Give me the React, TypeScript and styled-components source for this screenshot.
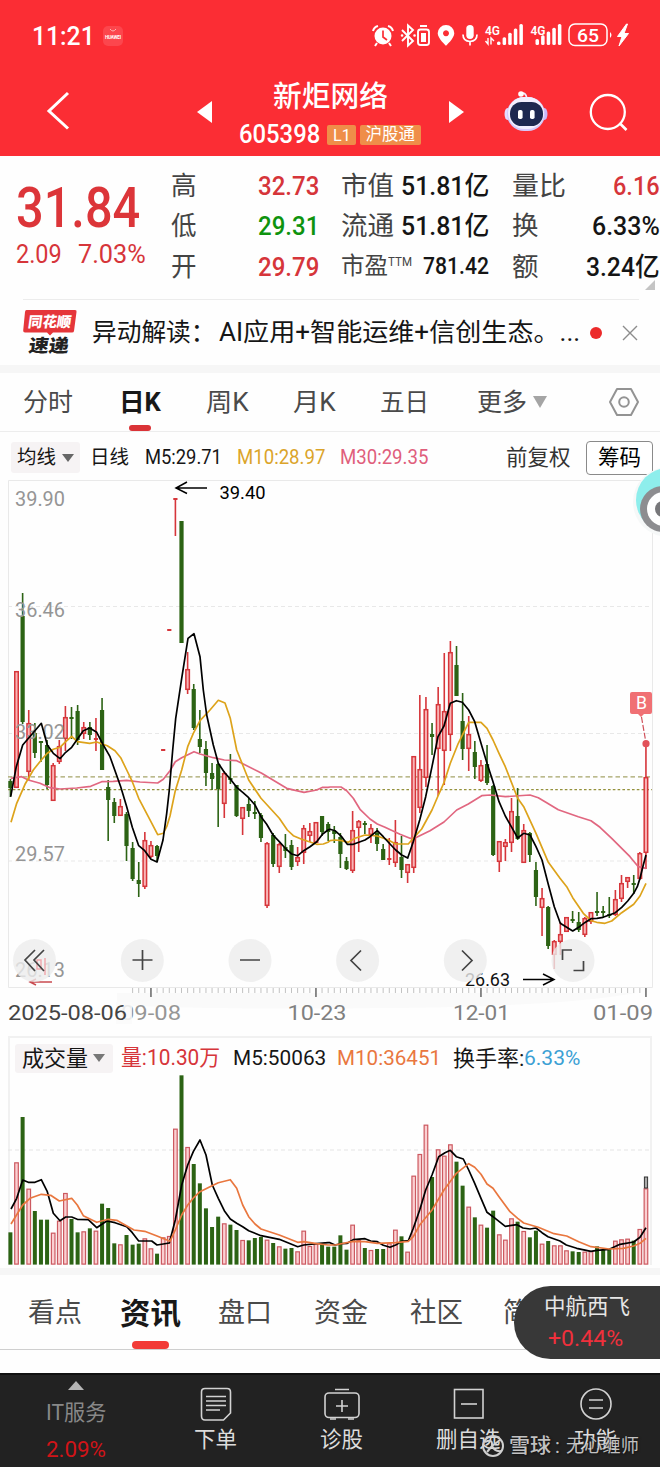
import React, { useLayoutEffect, useRef, useState } from "react";
import styled, { createGlobalStyle } from "styled-components";

const FONT = 'Roboto, "Noto Sans CJK SC", sans-serif';
const RED = "#d6353a";
const GREEN = "#2c6314";

const Global = createGlobalStyle`
  body { margin: 0; background: #fefefe; font-family: ${FONT}; }
  * { box-sizing: border-box; }
  svg { display: block; flex: none; }
`;

/* ---------- text that keeps a given width ---------- */
const FitBox = styled.span<{ $w: number; $size: number; $color?: string; $weight?: number; $ml?: number }>`
  display: block;
  flex: none;
  width: ${(p) => p.$w}px;
  margin-left: ${(p) => p.$ml ?? 0}px;
  height: ${(p) => Math.round(p.$size * 1.3)}px;
  line-height: ${(p) => Math.round(p.$size * 1.3)}px;
  font-size: ${(p) => p.$size}px;
  font-weight: ${(p) => p.$weight ?? 400};
  color: ${(p) => p.$color ?? "inherit"};
`;
const FitText = styled.span`
  display: inline-block;
  white-space: nowrap;
  transform-origin: 0 50%;
`;

type FitProps = { w: number; size: number; color?: string; weight?: number; ml?: number; children: React.ReactNode };
function Fit({ w, size, color, weight, ml, children }: FitProps) {
  const ref = useRef<HTMLSpanElement>(null);
  const [scale, setScale] = useState(1);
  useLayoutEffect(() => {
    if (ref.current) setScale(w / ref.current.offsetWidth);
  }, [w, size, children]);
  return (
    <FitBox $w={w} $size={size} $color={color} $weight={weight} $ml={ml}>
      <FitText ref={ref} style={{ transform: `scaleX(${scale})` }}>{children}</FitText>
    </FitBox>
  );
}

/* ---------- page ---------- */
const Page = styled.main`
  position: relative;
  width: 660px;
  height: 1467px;
  overflow: hidden;
  background: #fefefe;
  color: #161616;
`;
const Header = styled.header`
  height: 156px;
  background: #fb2d34;
  color: #fff;
`;
const StatusBar = styled.div`
  display: flex;
  align-items: center;
  height: 72px;
  padding: 0 29px 0 32px;
`;
const Chip = styled.span`
  width: 20px;
  height: 20px;
  margin: 0 auto 0 8px;
  border-radius: 5px;
  background: #fc464d;
`;
const NavBar = styled.div`
  display: flex;
  align-items: center;
  height: 80px;
  padding: 0 32px 0 46px;
`;
const Arrow = styled.svg<{ $ml: number }>`
  margin-left: ${(p) => p.$ml}px;
`;
const TitleBlock = styled.div`
  width: 182px;
  margin-left: 27px;
  display: flex;
  flex-direction: column;
  align-items: center;
  margin-top: 5px;
`;
const CodeRow = styled.div`
  display: flex;
  align-items: center;
  height: 34px;
  margin-top: 2px;
`;
const Tag = styled.span<{ $w: number; $ml: number }>`
  display: flex;
  justify-content: center;
  align-items: center;
  width: ${(p) => p.$w}px;
  height: 20px;
  margin-left: ${(p) => p.$ml}px;
  border-radius: 2px;
  background: #ef8e49;
`;

/* ---------- quote ---------- */
const Quote = styled.section`
  position: relative;
  display: flex;
  height: 143px;
  padding: 10px 0 0 16px;
`;
const PriceBlock = styled.div`
  width: 155px;
  padding-top: 6px;
`;
const ChangeRow = styled.div`
  display: flex;
  margin-top: -7px;
`;
const StatColumn = styled.div<{ $w: number; $ml?: number }>`
  width: ${(p) => p.$w}px;
  margin-left: ${(p) => p.$ml ?? 0}px;
`;
const StatRow = styled.div`
  display: flex;
  justify-content: space-between;
  align-items: center;
  height: 40.3px;
  color: #444;
`;
const Sup = styled.span`
  display: flex;
  align-items: flex-start;
  height: 28px;
  margin-right: auto;
`;
const Corner = styled.span`
  position: absolute;
  right: 5px;
  bottom: 9px;
  border-left: 10px solid transparent;
  border-bottom: 10px solid #c4c4c4;
`;

/* ---------- news ---------- */
const News = styled.section`
  display: flex;
  align-items: center;
  height: 66px;
  margin: 0 21px 0 23px;
  border-top: 1px solid #ececec;
`;
const Dot = styled.span`
  flex: none;
  width: 12px;
  height: 12px;
  margin: 0 27px 0 10px;
  border-radius: 50%;
  background: #ec2a2a;
`;
const Band = styled.div<{ $h: number }>`
  height: ${(p) => p.$h}px;
  background: #f6f6f6;
`;

/* ---------- tabs ---------- */
const Tabs = styled.nav<{ $h: number; $line: string }>`
  display: flex;
  align-items: center;
  height: ${(p) => p.$h}px;
  border-bottom: 1px solid ${(p) => p.$line};
  color: #4a4a4a;
  overflow: hidden;
`;
const Tab = styled.div<{ $ml: number; $pt?: number; $bar?: number; $barH?: number; $red?: string }>`
  position: relative;
  display: flex;
  align-items: center;
  height: 100%;
  margin-left: ${(p) => p.$ml}px;
  padding-top: ${(p) => p.$pt ?? 0}px;
  &::after {
    content: "";
    position: absolute;
    display: ${(p) => (p.$bar ? "block" : "none")};
    left: calc(50% - ${(p) => (p.$bar ?? 0) / 2}px);
    bottom: 0;
    width: ${(p) => p.$bar ?? 0}px;
    height: ${(p) => p.$barH ?? 6}px;
    border-radius: 4px;
    background: ${(p) => p.$red ?? "#da3337"};
  }
`;
const Down = styled.span<{ $w: number; $h: number; $ml: number; $c: string }>`
  margin-left: ${(p) => p.$ml}px;
  border: ${(p) => p.$w / 2}px solid transparent;
  border-top: ${(p) => p.$h}px solid ${(p) => p.$c};
  border-bottom: 0;
`;

/* ---------- indicators ---------- */
const IndicatorRow = styled.div`
  display: flex;
  align-items: center;
  height: 48px;
  padding: 3px 7px 0 11px;
`;
const Select = styled.div<{ $w: number; $h: number; $pl: number }>`
  display: flex;
  align-items: center;
  width: ${(p) => p.$w}px;
  height: ${(p) => p.$h}px;
  padding-left: ${(p) => p.$pl}px;
  border-radius: 3px;
  background: #f6f3f4;
`;
const OutlineButton = styled.button`
  display: flex;
  justify-content: center;
  align-items: center;
  width: 67px;
  height: 34px;
  margin-left: 15px;
  padding: 0;
  border: 1px solid #8a8a8a;
  border-radius: 4px;
  background: #fff;
  font-family: inherit;
`;
const VolumeHead = styled.div`
  display: flex;
  align-items: center;
  height: 39px;
  margin: 0 8px;
  padding: 3px 0 0 5px;
  border: 2px solid #f1f1f1;
  border-bottom: 0;
`;

/* ---------- bottom ---------- */
const Gap = styled.div`
  height: 23px;
`;
const Dock = styled.footer`
  display: flex;
  height: 95px;
  background: #222;
  border-top: 2px solid #111;
  color: #dcdcdc;
`;
const DockItem = styled.div<{ $w: number; $ml: number }>`
  display: flex;
  flex-direction: column;
  align-items: center;
  width: ${(p) => p.$w}px;
  margin-left: ${(p) => p.$ml}px;
  padding-top: 12px;
  gap: 5px;
`;
const Sector = styled.div`
  display: flex;
  flex-direction: column;
  align-items: center;
  width: 60px;
  margin-left: 46px;
  padding-top: 6px;
  gap: 8.5px;
`;
const Up = styled.span`
  border: 8px solid transparent;
  border-bottom: 9px solid #b5b5b5;
  border-top: 0;
`;
const FloatPill = styled.aside`
  position: absolute;
  right: 0;
  top: 1286px;
  width: 146px;
  height: 73px;
  padding: 7px 0 0 30px;
  border-radius: 37px 0 0 37px;
  background: #383838;
  color: #e6e6e6;
  display: flex;
  flex-direction: column;
  gap: 3px;
`;
const Watermark = styled.div`
  position: absolute;
  left: 481px;
  top: 1432px;
  height: 28px;
  display: flex;
  align-items: center;
  color: rgba(225, 225, 225, 0.85);
  text-shadow: 1px 1px 2px #111;
`;
const Assistant = styled.div`
  position: absolute;
  right: 0;
  top: 460px;
`;

/* ---------- market data: [rising, high, bodyTop, bodyBottom, low] on the pixel scale ---------- */
type Candle = [number, number, number, number, number];
const candles: Candle[] = [
  [0, 779, 781, 788, 797], [1, 671, 671, 788, 788], [0, 593, 616, 722, 724], [1, 710, 723, 772, 780], [0, 723, 733, 753, 758],
  [0, 741, 741, 743, 762], [0, 740, 745, 785, 789], [1, 763, 765, 801, 801], [1, 740, 746, 762, 764], [1, 706, 717, 739, 751],
  [0, 707, 717, 719, 739], [0, 705, 711, 740, 745], [1, 722, 727, 734, 739], [0, 722, 727, 735, 740], [1, 718, 738, 740, 751],
  [0, 698, 710, 770, 770], [0, 780, 787, 800, 841], [0, 798, 802, 816, 823], [1, 799, 806, 816, 816], [0, 812, 814, 846, 861],
  [0, 842, 848, 879, 881], [0, 862, 880, 884, 897], [1, 832, 840, 887, 889], [1, 841, 845, 857, 858], [0, 845, 846, 856, 861],
  [1, 749, 749, 751, 751], [1, 629, 629, 631, 631], [1, 498, 498, 500, 536], [0, 521, 521, 643, 643], [1, 652, 669, 690, 694],
  [0, 684, 689, 728, 730], [0, 710, 739, 747, 753], [0, 741, 749, 773, 786], [0, 763, 773, 779, 790], [0, 763, 764, 789, 827],
  [1, 771, 773, 804, 818], [0, 754, 778, 780, 784], [0, 785, 785, 816, 817], [1, 807, 807, 819, 835], [0, 798, 804, 811, 817],
  [0, 801, 812, 814, 819], [0, 813, 815, 838, 842], [1, 842, 843, 906, 908], [0, 833, 835, 864, 867], [1, 843, 844, 867, 873],
  [0, 834, 847, 851, 858], [0, 840, 845, 867, 870], [1, 847, 857, 862, 866], [1, 825, 828, 853, 864], [1, 823, 831, 836, 842],
  [1, 822, 822, 843, 843], [0, 816, 816, 832, 836], [0, 822, 824, 832, 841], [0, 826, 831, 834, 843], [0, 833, 837, 854, 868],
  [0, 857, 861, 869, 870], [1, 811, 830, 871, 873], [1, 820, 821, 828, 852], [0, 821, 823, 825, 834], [1, 824, 828, 835, 843],
  [0, 828, 833, 844, 851], [0, 844, 849, 860, 860], [1, 838, 858, 860, 865], [1, 820, 842, 863, 867], [0, 836, 857, 870, 878],
  [1, 864, 864, 873, 883], [1, 756, 756, 868, 873], [1, 695, 769, 808, 813], [1, 697, 709, 778, 787], [0, 723, 734, 737, 755],
  [1, 687, 704, 749, 796], [1, 653, 711, 751, 785], [1, 641, 652, 735, 751], [0, 646, 665, 696, 696], [0, 693, 721, 749, 760],
  [1, 716, 734, 749, 771], [0, 741, 752, 767, 779], [1, 760, 765, 781, 782], [0, 745, 764, 783, 785], [0, 785, 786, 855, 856],
  [1, 841, 841, 862, 872], [1, 839, 842, 847, 861], [1, 798, 811, 843, 852], [0, 788, 816, 839, 840], [1, 824, 830, 863, 863],
  [0, 832, 833, 855, 862], [0, 862, 870, 897, 906], [1, 888, 898, 908, 936], [0, 906, 907, 946, 949], [1, 940, 941, 955, 969],
  [1, 922, 934, 942, 955], [1, 917, 917, 932, 932], [0, 911, 919, 921, 923], [0, 912, 922, 930, 932], [1, 917, 918, 935, 937],
  [1, 912, 912, 922, 924], [0, 892, 911, 913, 916], [0, 906, 911, 913, 918], [0, 897, 914, 916, 918], [1, 890, 899, 915, 916],
  [1, 875, 883, 899, 902], [1, 877, 877, 882, 888], [0, 875, 883, 885, 894], [1, 852, 853, 879, 880], [1, 744, 777, 853, 869],
];

/* volume bar tops, thirds of a pixel below the volume origin */
const volumes = [
  607, 397, 261, 476, 543, 569, 569, 608, 572, 489, 567, 607, 604, 595, 602, 521, 534, 640, 643, 615, 644, 641, 625, 655, 671,
  622, 618, 296, 136, 351, 402, 460, 535, 591, 560, 580, 584, 600, 630, 631, 624, 621, 629, 639, 649, 656, 654, 664, 602, 648,
  640, 643, 650, 650, 616, 659, 584, 630, 654, 660, 657, 657, 640, 599, 619, 665, 437, 372, 284, 441, 358, 377, 343, 395, 467,
  530, 562, 584, 593, 542, 613, 629, 565, 575, 603, 622, 602, 641, 633, 646, 646, 661, 664, 666, 665, 663, 649, 659, 658, 632,
  628, 626, 632, 597, 475,
];

const X0 = 10.4;
const STEP = 6.111;
const BASE = 1264.6;
const cx = (i: number) => X0 + i * STEP;

/* "x,y x,y" in thirds of a pixel, shifted to an origin */
const plot = (pts: string, ox: number, oy: number) =>
  pts.split(" ").map((p) => {
    const [x, y] = p.split(",").map(Number);
    return `${(ox + x / 3).toFixed(1)},${(oy + y / 3).toFixed(1)}`;
  }).join(" ");

const ma5 = [
  plot("32,320 49,230 68,165 104,123 124,100 142,165 160,190 180,206 197,187 215,172 250,122 269,114 290,127 310,165 330,200 362,290 380,350 397,412 416,467 434,482 453,508 471,516 489,450 500,370 508,300 518,180 527,85 545,-35 564,-155 582,-169 600,-100 610,0 620,75 640,165 655,220 673,247 691,267 710,292 728,307 746,323 765,345 783,380 800,403 819,435 838,455 856,475 875,492 893,497 911,482 930,470 950,455 968,432 984,420", 0, 690),
  plot("0,628 15,632 35,650 52,673 70,673 105,660 120,650 142,632 160,650 180,672 197,690 215,705 233,714 250,665 269,600 287,530 306,440 324,350 342,318 361,250 379,242 397,247 416,270 434,305 453,370 471,430 489,485 507,545 526,588 544,620 563,654 581,640 600,645 618,680 636,720 654,790 673,860 691,910 710,922 728,933 746,922 764,908 783,896 801,895 819,892 838,885 856,878 875,862 893,843 911,820 922,800 930,775 940,735 948,705", 330, 620),
].join(" ");
const ma10 = [
  plot("33,397 50,340 75,283 100,240 124,210 142,190 160,178 180,172 197,155 215,139 232,155 269,160 290,156 322,167 345,182 362,203 380,240 397,275 416,325 445,380 473,434 490,430 500,410 510,378 526,302 545,240 563,170 580,130 600,92 630,60 655,31 675,39 691,85 710,180 728,225 746,270 783,325 838,385 862,420 880,437 905,448 930,456 950,463 970,462 984,457", 0, 690),
  plot("0,662 15,660 35,662 55,667 75,655 105,645 142,648 175,660 197,672 235,672 250,655 275,627 306,570 324,528 342,488 361,430 385,370 416,307 453,307 471,325 489,360 507,400 526,440 563,535 581,560 618,640 654,725 690,775 710,800 728,833 760,880 783,902 800,907 825,910 845,903 875,878 911,853 930,828 948,790", 330, 620),
].join(" ");
const ma30 = [
  plot("32,265 65,260 85,270 120,280 150,293 180,297 230,294 272,289 305,275 340,274 380,271 420,276 473,279 490,268 510,242 526,215 545,203 582,185 600,192 640,203 673,210 710,212 730,222 785,250 830,277 860,295 912,307 950,300 968,292 984,292", 0, 690),
  plot("0,501 33,501 50,512 70,535 90,568 120,597 142,612 165,622 210,643 240,655 260,652 300,632 342,606 380,570 415,552 455,527 480,525 526,530 600,525 625,533 650,548 685,569 745,590 783,602 810,622 845,655 900,710 925,740 948,745", 330, 620),
].join(" ");
const vol5 = [
  plot("33,537 50,505 68,450 85,457 105,457 124,449 142,485 160,550 180,572 197,561 215,561 232,568 265,569 290,593 320,573 345,578 380,590 397,608 416,633 455,633 471,645 508,639 526,570 545,465 563,405 580,365 600,330 618,375 637,465 655,505 673,542 691,567 710,580 728,590 746,602 783,617 838,628 893,650 911,645 950,641 984,638", 0, 1030),
  plot("0,638 15,645 35,641 52,640 70,629 105,626 122,633 142,635 160,646 180,652 197,645 215,634 235,632 250,595 269,540 287,480 306,435 326,380 345,368 361,361 379,380 400,387 416,420 434,460 453,505 471,547 489,560 526,589 561,584 579,594 600,597 618,594 636,608 654,620 690,633 709,645 740,655 783,664 800,661 838,658 870,643 911,636 930,622 948,593", 330, 1030),
].join(" ");
const vol10 = [
  plot("33,582 68,525 90,505 124,493 152,496 178,513 215,505 232,525 250,557 290,577 325,568 350,571 402,600 434,604 471,618 495,628 510,634 526,600 545,555 563,525 582,502 600,485 630,470 655,458 691,449 710,475 728,525 746,560 765,582 783,597 838,615 893,637 911,635 950,641 984,645", 0, 1030),
  plot("0,645 15,645 70,634 105,635 142,640 197,638 235,634 250,620 269,585 306,540 342,480 379,430 416,401 434,412 453,433 471,462 489,475 507,500 540,545 563,565 581,579 625,592 672,611 710,618 746,635 783,650 838,657 880,655 911,648 930,640 948,625", 330, 1030),
].join(" ");

function Label({ x, y, w, size = 20, fill = "#959595", children }: { x: number; y: number; w: number; size?: number; fill?: string; children: string }) {
  return (
    <text x={x} y={y + size * 0.356} textLength={w} lengthAdjust="spacingAndGlyphs" fontSize={size} fill={fill} fontFamily={FONT}>
      {children}
    </text>
  );
}

function PriceChart() {
  return (
    <svg width="660" height="556" viewBox="0 480 660 556">
      <path d="M8.500 987.500V480.500H652.500V987.500Z" fill="none" stroke="#e9e9e9" />
      <path d="M117 993H636q-80 14-250 15q-180 2-269-3Z" fill="#fafafa" />
      <g stroke="#e8e8e8" strokeDasharray="4 3">
        <path d="M8 606.500H652M8 733.500H652M8 861H652" />
      </g>
      <path d="M8 776.800H652" stroke="#a5a468" strokeWidth="1.200" strokeDasharray="4.500 3" />
      <path d="M8 789.600H652" stroke="#94913c" strokeWidth="1.200" strokeDasharray="2.600 2.200" />
      {candles.map(([up, high, top, bottom, low], i) => {
        const c = up ? RED : GREEN;
        return (
          <g key={i}>
            <path d={`M${cx(i)} ${high}V${low}`} stroke={c} strokeWidth="1.600" />
            {up && bottom - top > 3 ? (
              <rect x={cx(i) - 1.75} y={top + 0.7} width="3.500" height={bottom - top - 1.4} fill="#f9b4b6" stroke={c} strokeWidth="1.500" />
            ) : (
              <rect x={cx(i) - 2.1} y={top} width="4.200" height={bottom - top} fill={c} />
            )}
          </g>
        );
      })}
      <Label x={15} y={499} w={50}>39.90</Label>
      <Label x={15} y={610} w={50}>36.46</Label>
      <Label x={15} y={731.5} w={50}>33.02</Label>
      <Label x={15} y={853.5} w={50}>29.57</Label>
      <Label x={15} y={969.5} w={50}>26.13</Label>
      <g fill="none" strokeWidth="1.700" strokeLinejoin="round">
        <polyline points={ma30} stroke="#e16780" />
        <polyline points={ma10} stroke="#dda31b" />
        <polyline points={ma5} stroke="#000" />
      </g>
      <g stroke="#000" strokeWidth="1.500" fill="none">
        <path d="M207 488H176M187 482L176 488L187 493.500" />
        <path d="M523 979.500H553M543 974L554 979.500L543 985" />
      </g>
      <Label x={219.500} y={492.500} w={46} size={18.500} fill="#000">39.40</Label>
      <Label x={465} y={979} w={45} size={18.500} fill="#111">26.63</Label>
      <path d="M52 982H30M36 979L30 982L36 985" stroke="#c94b50" strokeWidth="1.500" fill="none" />
      <g fill="#ececec" fillOpacity="0.800">
        {[34.5, 142.3, 250, 357.6, 465.3, 573].map((x) => <circle key={x} cx={x} cy="960.500" r="21.500" />)}
      </g>
      <path d="M37 960v9h4v-9zM45 958v17" stroke="#efa9ae" strokeWidth="1.500" fill="none" />
      <g stroke="#444" strokeWidth="1.700" fill="none">
        <path d="M35 950L25 960L35 971M44 950L34 960L44 971" />
        <path d="M132.500 960H152.500M142.500 950V970M240 960H260" />
        <path d="M361 950.500L351 960.500L361 970.500M462 950.500L472 960.500L462 970.500" />
        <path d="M562.500 960V950H572M583.500 961V970.500H573.500" />
      </g>
      {candles.map((_, i) => {
        if (i < 20) return null;
        const major = (i - 23) % 27 === 0;
        return <path key={i} d={`M${cx(i)} 988V${major ? 997 : 993}`} stroke={major ? "#666" : "#c2c2c2"} strokeWidth={major ? 1.5 : 1} />;
      })}
      <Label x={121} y={1013} w={60} fill="#969696">09-08</Label>
      <rect x="116" y="1002" width="16" height="22" fill="#fafafa" fillOpacity="0.850" />
      <Label x={8} y={1013} w={119} fill="#444">2025-08-06</Label>
      <Label x={287.500} y={1013} w={59} fill="#808080">10-23</Label>
      <Label x={453} y={1013} w={57} fill="#808080">12-01</Label>
      <Label x={593} y={1013} w={60} fill="#808080">01-09</Label>
      <path d="M632 692H650Q652 692 652 694V712Q652 714 650 714H644L641 717L638 714H632Q630 714 630 712V694Q630 692 632 692Z" fill="#f07074" />
      <Label x={636} y={703} w={11} size={18} fill="#fff">B</Label>
      <path d="M641.500 717L646 743" stroke="#cf4f59" strokeWidth="1.200" strokeDasharray="6 2" />
      <circle cx="646" cy="743.700" r="3.600" fill="#e2525a" />
    </svg>
  );
}

function VolumeChart() {
  return (
    <svg width="660" height="193" viewBox="0 1075 660 193">
      <path d="M9 1075V1265M651 1075V1265" stroke="#f1f1f1" strokeWidth="2" />
      <path d="M8 1150H652" stroke="#e4e4e4" strokeDasharray="4 3" />
      {volumes.map((v, i) => {
        const top = 1030 + v / 3;
        return candles[i][0] ? (
          <rect key={i} x={cx(i) - 1.8} y={top + 0.5} width="3.600" height={BASE - top - 1} fill="#fbd0d2" stroke="#cc5960" strokeWidth="1.200" />
        ) : (
          <rect key={i} x={cx(i) - 2} y={top} width="4" height={BASE - top} fill={GREEN} />
        );
      })}
      <rect x="644.400" y="1177" width="3.200" height="11" fill="#aaa" stroke="#333" />
      <g fill="none" strokeWidth="1.700" strokeLinejoin="round">
        <polyline points={vol5} stroke="#000" />
        <polyline points={vol10} stroke="#e9773f" />
      </g>
    </svg>
  );
}

/* ---------- drawings ---------- */
function StatusIcons() {
  const bars = (x: number, first: number, n: number) =>
    Array.from({ length: n }, (_, k) => {
      const h = first + (k * (21 - first)) / (n - 1);
      return <rect key={k} x={x + k * 5.6} y={45 - h} width="3.500" height={h} rx="1.500" />;
    });
  return (
    <svg width="260" height="30" viewBox="371 21 260 30" fill="#fff">
      <circle cx="383" cy="36" r="8.500" />
      <path d="M383 30.500V37L387 40" stroke="#fb2d34" strokeWidth="1.700" fill="none" />
      <path d="M373 31Q374 27 378 26M393 31Q392 27 388 26M377 43L375 46M389 43L391 46" stroke="#fff" strokeWidth="2" fill="none" />
      <path d="M402 30L413 41L408 45.500V25.500L413 30L402 41" stroke="#fff" strokeWidth="1.900" fill="none" />
      <path d="M402 35.500h.1M414.500 35.500h.1" stroke="#fff" strokeWidth="2.500" strokeLinecap="round" />
      <rect x="418" y="29.500" width="11" height="15.500" rx="2.500" fill="none" stroke="#fff" strokeWidth="1.900" />
      <path d="M420 26H427" stroke="#fff" strokeWidth="2" />
      <rect x="421" y="33" width="5" height="9" />
      <path fillRule="evenodd" d="M446 25a8.300 8.300 0 0 1 8.300 8.300c0 5-8.300 12.500-8.300 12.500s-8.300-7.500-8.300-12.500A8.300 8.300 0 0 1 446 25zm0 5.200a3 3 0 1 0 .01 0z" />
      <rect x="466.300" y="25" width="7.400" height="14" rx="3.700" />
      <path d="M463 34.500Q463 41 470 41.500Q477 41 477 34.500M470 41V45.500" stroke="#fff" strokeWidth="1.700" fill="none" />
      <text x="485" y="34.500" fontSize="13.500" fontWeight="600" textLength="15" lengthAdjust="spacingAndGlyphs" fontFamily={FONT}>4G</text>
      <path d="M488 38V44L485.500 41M491 44.500V38L494 41" stroke="#fff" strokeWidth="1.400" fill="none" />
      {bars(497, 3.5, 5)}
      <text x="530.500" y="34.500" fontSize="13.500" fontWeight="600" textLength="15" lengthAdjust="spacingAndGlyphs" fontFamily={FONT}>4G</text>
      {bars(535.5, 6, 5)}
      <rect x="569" y="24" width="38" height="21.500" rx="6" fill="none" stroke="#fff" strokeWidth="1.500" />
      <text x="577" y="41.500" fontSize="19" fontWeight="500" textLength="22" lengthAdjust="spacingAndGlyphs" fontFamily={FONT}>65</text>
      <path d="M610 32Q613 35 610 38Z" />
      <path d="M626.500 24L617.500 36.500H622L619 46L628.500 33.500H624L627.500 24Z" stroke="#fff" strokeWidth="1" />
    </svg>
  );
}

function Robot() {
  return (
    <svg width="46" height="44" viewBox="504 89 46 44">
      <path d="M520 93Q526 90 527 98" stroke="#eee9ff" strokeWidth="1.800" fill="none" />
      <circle cx="521" cy="93" r="2.800" fill="#fff" />
      <ellipse cx="507.500" cy="113" rx="3" ry="6" fill="#e4dcff" />
      <ellipse cx="544.500" cy="113" rx="3" ry="6" fill="#cbb9f9" />
      <rect x="507" y="96" width="38" height="34" rx="17" fill="#d5c8fa" />
      <rect x="508" y="96" width="36" height="32" rx="16" fill="#f2efff" />
      <rect x="510" y="101" width="33" height="24" rx="11.500" fill="#1d2850" />
      <rect x="518" y="109" width="4.600" height="9" rx="1.800" fill="#fff" />
      <rect x="530" y="109" width="4.600" height="9" rx="1.800" fill="#fff" />
    </svg>
  );
}

function NewsLogo() {
  const t = { fontFamily: FONT, fontWeight: 900, lengthAdjust: "spacingAndGlyphs" as const };
  return (
    <svg width="54" height="46" viewBox="23 310 54 46">
      <path d="M26.500 310H75Q77 310 76.500 312L74 331Q73.800 332.500 72 332.500H53L50 335.500L47 332.500H25Q23 332.500 23.200 330.500L25 312Q25.200 310 26.500 310Z" fill="#e5363a" />
      <g transform="skewX(-8)">
        <text x="73.500" y="326.800" fontSize="14.500" textLength="43" fill="#fff" {...t}>同花顺</text>
        <text x="77.500" y="352" fontSize="18" textLength="40" fill="#222" {...t}>速递</text>
      </g>
    </svg>
  );
}

const stats = [
  { w: 148, ml: 0, rows: [["高", 26, "32.73", 61, RED], ["低", 26, "29.31", 61, "#0e930e"], ["开", 26, "29.79", 61, RED]] },
  { w: 148, ml: 22, rows: [["市值", 53, "51.81亿", 88, "#151515"], ["流通", 53, "51.81亿", 88, "#151515"], ["市盈", 47, "781.42", 66, "#151515"]] },
  { w: 148, ml: 23, rows: [["量比", 54, "6.16", 47, RED], ["换", 27, "6.33%", 68, "#151515"], ["额", 27, "3.24亿", 74, "#151515"]] },
] as { w: number; ml: number; rows: [string, number, string, number, string][] }[];

export default function App() {
  return (
    <Page>
      <Global />
      <Header>
        <StatusBar>
          <Fit w={63} size={25.5} weight={500}>11:21</Fit>
          <Chip>
            <svg width="20" height="20" viewBox="0 0 20 20">
              <path d="M7 3Q10 7 13 3" stroke="#ffb3b3" fill="none" />
              <text x="2" y="12.500" fontSize="4.500" fontWeight="700" fill="#fff" textLength="16" fontFamily={FONT}>HUAWEI</text>
            </svg>
          </Chip>
          <StatusIcons />
        </StatusBar>
        <NavBar>
          <svg width="24" height="42" viewBox="0 0 24 42"><path d="M22 2L3 20L22 37.500" stroke="#fff" strokeWidth="3" fill="none" /></svg>
          <Arrow $ml={127} width="15" height="22" viewBox="0 0 15 22"><path d="M15 0V22L0 11Z" fill="#fff" /></Arrow>
          <TitleBlock>
            <Fit w={115} size={29} weight={500}>新炬网络</Fit>
            <CodeRow>
              <Fit w={81} size={25} weight={500}>605398</Fit>
              <Tag $w={29} $ml={7}><Fit w={18} size={17}>L1</Fit></Tag>
              <Tag $w={61} $ml={4}><Fit w={50} size={16.5}>沪股通</Fit></Tag>
            </CodeRow>
          </TitleBlock>
          <Arrow $ml={28} width="15" height="22" viewBox="0 0 15 22"><path d="M0 0V22L15 11Z" fill="#fff" /></Arrow>
          <Arrow $ml={40} as="span" />
          <Robot />
          <Arrow $ml={38} width="40" height="40" viewBox="588 91 40 40">
            <circle cx="607.800" cy="111" r="17" fill="none" stroke="#fff" strokeWidth="2.300" />
            <path d="M619.500 122L626.500 129" stroke="#fff" strokeWidth="2.600" />
          </Arrow>
        </NavBar>
      </Header>

      <Quote>
        <PriceBlock>
          <Fit w={124} size={55} weight={500} color="#dc3539">31.84</Fit>
          <ChangeRow>
            <Fit w={46} size={26} weight={400} color={RED}>2.09</Fit>
            <Fit w={68} size={26} weight={400} color={RED} ml={16}>7.03%</Fit>
          </ChangeRow>
        </PriceBlock>
        {stats.map((col, c) => (
          <StatColumn key={c} $w={col.w} $ml={col.ml}>
            {col.rows.map(([label, lw, value, vw, color]) => (
              <StatRow key={label}>
                <Fit w={lw} size={lw === 47 ? 24 : 26.5}>{label}</Fit>
                {label === "市盈" && <Sup><Fit w={24} size={13}>TTM</Fit></Sup>}
                <Fit w={vw} size={lw === 47 ? 24 : 26} weight={500} color={color}>{value}</Fit>
              </StatRow>
            ))}
          </StatColumn>
        ))}
        <Corner />
      </Quote>

      <News>
        <NewsLogo />
        <Fit w={124} size={25.5} ml={15}>异动解读：</Fit>
        <Fit w={361} size={25.5} ml={3}>AI应用+智能运维+信创生态。...</Fit>
        <Dot />
        <Arrow $ml={-7} width="16" height="16" viewBox="0 0 16 16"><path d="M1 1L15 15M15 1L1 15" stroke="#8c8c8c" strokeWidth="1.400" /></Arrow>
      </News>
      <Band $h={8} />

      <Tabs $h={59} $line="#ededed">
        <Tab $ml={23}><Fit w={50} size={25}>分时</Fit></Tab>
        <Tab $ml={46} $bar={22}><Fit w={42} size={25} weight={700} color="#181818">日K</Fit></Tab>
        <Tab $ml={45}><Fit w={43} size={25}>周K</Fit></Tab>
        <Tab $ml={44}><Fit w={43} size={25}>月K</Fit></Tab>
        <Tab $ml={44}><Fit w={49} size={25}>五日</Fit></Tab>
        <Tab $ml={48}><Fit w={50} size={25}>更多</Fit><Down $w={14} $h={12} $ml={6} $c="#a5a5a5" /></Tab>
        <Arrow $ml={61} width="32" height="30" viewBox="0 0 32 30">
          <path d="M9 2H23L30 15L23 28H9L2 15Z" fill="none" stroke="#939393" strokeWidth="2" strokeLinejoin="round" />
          <circle cx="16" cy="15" r="4.800" fill="none" stroke="#939393" strokeWidth="2" />
        </Arrow>
      </Tabs>

      <IndicatorRow>
        <Select $w={69} $h={31} $pl={6}><Fit w={39} size={19.5}>均线</Fit><Down $w={12} $h={8} $ml={6} $c="#666" /></Select>
        <Fit w={39} size={19.5} ml={10}>日线</Fit>
        <Fit w={77} size={20.5} ml={16}>M5:29.71</Fit>
        <Fit w={88} size={20.5} ml={15} color="#dba42a">M10:28.97</Fit>
        <Fit w={88} size={20.5} ml={15} color="#e05e7c">M30:29.35</Fit>
        <Fit w={65} size={21.5} ml={78} color="#333">前复权</Fit>
        <OutlineButton><Fit w={43} size={21.5}>筹码</Fit></OutlineButton>
      </IndicatorRow>

      <PriceChart />

      <VolumeHead>
        <Select $w={98} $h={29} $pl={7}><Fit w={66} size={22}>成交量</Fit><Down $w={12} $h={8} $ml={5} $c="#777" /></Select>
        <Fit w={99} size={21.5} ml={8} color={RED}>量:10.30万</Fit>
        <Fit w={93} size={21} ml={13}>M5:50063</Fit>
        <Fit w={104} size={21} ml={11} color="#e9773f">M10:36451</Fit>
        <Fit w={71} size={22} ml={12}>换手率:</Fit>
        <Fit w={56} size={21} color="#3ba0d4">6.33%</Fit>
      </VolumeHead>
      <VolumeChart />
      <Band $h={7} />

      <Tabs $h={75} $line="#cfcfcf">
        <Tab $ml={28} $pt={3}><Fit w={54} size={27}>看点</Fit></Tab>
        <Tab $ml={38} $pt={3} $bar={37} $barH={8} $red="#f23b37"><Fit w={61} size={30} weight={700} color="#181818">资讯</Fit></Tab>
        <Tab $ml={37} $pt={3}><Fit w={54} size={27}>盘口</Fit></Tab>
        <Tab $ml={42} $pt={3}><Fit w={54} size={27}>资金</Fit></Tab>
        <Tab $ml={42} $pt={3}><Fit w={53} size={27}>社区</Fit></Tab>
        <Tab $ml={40} $pt={3}><Fit w={54} size={27}>简况</Fit></Tab>
      </Tabs>
      <Gap />

      <Dock>
        <Sector>
          <Up />
          <Fit w={60} size={21.5} color="#888">IT服务</Fit>
          <Fit w={60} size={22} color="#d01418">2.09%</Fit>
        </Sector>
        <DockItem $w={43} $ml={88}>
          <svg width="32" height="34" viewBox="0 0 32 34" fill="none" stroke="#d2d2d2" strokeWidth="1.600">
            <path d="M5 1.500H27Q30.500 1.500 30.500 5V26L23.500 33H5Q1.500 33 1.500 29V5Q1.500 1.500 5 1.500Z" />
            <path d="M6 9.500H26M6 14H26M6 18.500H26M6 23H20" />
          </svg>
          <Fit w={43} size={21.5}>下单</Fit>
        </DockItem>
        <DockItem $w={43} $ml={83}>
          <svg width="36" height="34" viewBox="0 0 36 34" fill="none" stroke="#d2d2d2" strokeWidth="1.600">
            <rect x="1" y="6" width="34" height="24.500" rx="4" />
            <path d="M11 2.500H25M18 13V25M12 19H24M6 32H12M24 32H30" />
          </svg>
          <Fit w={43} size={21.5}>诊股</Fit>
        </DockItem>
        <DockItem $w={65} $ml={73}>
          <svg width="32" height="34" viewBox="0 0 32 34" fill="none" stroke="#d2d2d2" strokeWidth="1.600">
            <rect x="1.500" y="2.500" width="28.500" height="28.500" />
            <path d="M8 17H24" />
          </svg>
          <Fit w={65} size={21.5}>删自选</Fit>
        </DockItem>
        <DockItem $w={43} $ml={73}>
          <svg width="32" height="34" viewBox="0 0 32 34" fill="none" stroke="#d2d2d2" strokeWidth="1.600">
            <circle cx="16" cy="17" r="15" />
            <path d="M9 13H23M9 21H23" />
          </svg>
          <Fit w={43} size={21.5}>功能</Fit>
        </DockItem>
      </Dock>

      <Assistant>
        <svg width="34" height="84" viewBox="626 460 34 84">
          <circle cx="668" cy="502" r="35" fill="#f6f8f8" />
          <circle cx="668" cy="500" r="32" fill="#8eeeec" />
          <circle cx="663" cy="509" r="23" fill="#8d8d90" />
          <circle cx="664" cy="509" r="17" fill="#fff" />
          <circle cx="663" cy="509" r="8" fill="#77777a" />
        </svg>
      </Assistant>
      <FloatPill>
        <Fit w={86} size={21.5}>中航西飞</Fit>
        <Fit w={75} size={22.5} ml={4} color="#f0303c">+0.44%</Fit>
      </FloatPill>
      <Watermark>
        <svg width="24" height="24" viewBox="0 0 24 24" fill="none" stroke="#d0d0d0" strokeWidth="2">
          <circle cx="12" cy="12" r="10" />
          <path d="M4 8Q12 4 11 12Q14 18 20 17M11 12L19 6M11 12L6 18" />
        </svg>
        <Fit w={42} size={20.5} weight={500} ml={4}>雪球</Fit>
        <Fit w={5} size={20} ml={4}>:</Fit>
        <Fit w={73} size={18.5} ml={6}>无心缠师</Fit>
      </Watermark>
    </Page>
  );
}
